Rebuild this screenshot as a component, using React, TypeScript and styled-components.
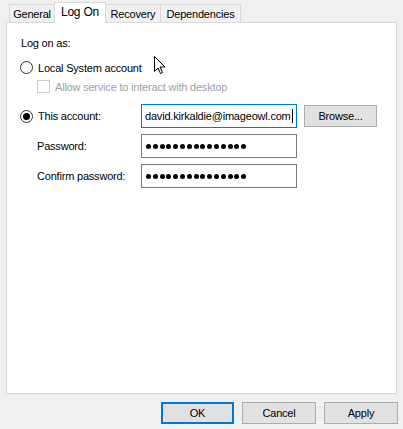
import styled, { createGlobalStyle } from "styled-components";

const GlobalStyle = createGlobalStyle`
  html, body {
    margin: 0;
    padding: 0;
    background: #f0f0f0;
  }
  * {
    box-sizing: border-box;
  }
`;

const tabs = [
  { label: "General", width: 46 },
  { label: "Log On", width: 52 },
  { label: "Recovery", width: 56 },
  { label: "Dependencies", width: 81 },
];

const Window = styled.div`
  position: relative;
  width: 403px;
  height: 429px;
  background: #f0f0f0;
  font-family: "Liberation Sans", Arial, sans-serif;
  font-size: 11px;
  letter-spacing: -0.2px;
  color: #000;
  overflow: hidden;
`;

const TabStrip = styled.div`
  display: flex;
  align-items: flex-end;
  height: 22px;
  padding: 2px 0 0 10px;
`;

const Tab = styled.div<{ $active?: boolean; $width: number }>`
  position: relative;
  z-index: ${(p) => (p.$active ? 2 : 1)};
  width: ${(p) => p.$width}px;
  height: ${(p) => (p.$active ? 21 : 18)}px;
  margin-left: -1px;
  margin-bottom: ${(p) => (p.$active ? -1 : 0)}px;
  display: flex;
  align-items: center;
  justify-content: center;
  padding-bottom: ${(p) => (p.$active ? 3 : 0)}px;
  border: 1px solid #d9d9d9;
  border-bottom: none;
  background: ${(p) => (p.$active ? "#fff" : "#f0f0f0")};
  font-size: ${(p) => (p.$active ? 12 : 11)}px;
`;

const Panel = styled.div`
  margin: 0 6px;
  height: 372px;
  border: 1px solid #d9d9d9;
  background: #fff;
  padding: 13px 0 0 13px;
  display: flex;
  flex-direction: column;
`;

const Heading = styled.div`
  line-height: 15px;
  margin-left: 1px;
`;

const OptionRow = styled.div<{ $indent?: number; $top: number }>`
  display: flex;
  align-items: center;
  gap: 5px;
  height: 15px;
  margin-top: ${(p) => p.$top}px;
  margin-left: ${(p) => p.$indent ?? 0}px;
`;

const Radio = styled.span<{ $checked?: boolean }>`
  width: 13px;
  height: 13px;
  border: 1px solid #333;
  border-radius: 50%;
  background: #fff;
  display: flex;
  align-items: center;
  justify-content: center;
  flex-shrink: 0;

  &::after {
    content: "";
    display: ${(p) => (p.$checked ? "block" : "none")};
    width: 7px;
    height: 7px;
    border-radius: 50%;
    background: #000;
  }
`;

const CheckBox = styled.span`
  width: 13px;
  height: 13px;
  border: 1px solid #cccccc;
  background: #fff;
  flex-shrink: 0;
`;

const Muted = styled.span`
  color: #a0a0a0;
`;

const AccountGrid = styled.div`
  display: grid;
  grid-template-columns: 114px 156px 73px;
  grid-template-rows: 24px 24px 24px;
  column-gap: 7px;
  row-gap: 6px;
  margin-top: 10px;
  align-items: center;
`;

const FieldLabel = styled.div<{ $indent?: boolean }>`
  display: flex;
  align-items: center;
  gap: 5px;
  padding-left: ${(p) => (p.$indent ? 17 : 0)}px;
`;

const Field = styled.div<{ $focused?: boolean }>`
  height: 24px;
  border: 1px solid ${(p) => (p.$focused ? "#0078d7" : "#7a7a7a")};
  background: #fff;
  display: flex;
  align-items: center;
  padding-left: 3px;
  white-space: nowrap;
`;

const Caret = styled.span`
  display: inline-block;
  width: 1px;
  height: 14px;
  margin-left: 1px;
  background: #000;
`;

const Dots = styled.div`
  display: flex;
  gap: 1.8px;
  padding-left: 1px;
`;

const Dot = styled.span`
  width: 5px;
  height: 5px;
  border-radius: 50%;
  background: #000;
`;

const Button = styled.button<{ $default?: boolean; $width?: number }>`
  height: 22px;
  width: ${(p) => p.$width ?? 74}px;
  padding: 0;
  font-family: inherit;
  font-size: 11px;
  letter-spacing: -0.2px;
  color: #000;
  background: #e1e1e1;
  border: ${(p) => (p.$default ? "2px solid #0078d7" : "1px solid #adadad")};
  border-radius: 0;
`;

const BrowseButton = styled(Button)`
  align-self: center;
`;

const Footer = styled.div`
  display: flex;
  justify-content: flex-end;
  gap: 8px;
  padding: 8px 5px 0 0;
`;

const Pointer = styled.svg`
  position: absolute;
  left: 154px;
  top: 56px;
`;

const PasswordDots = ({ count }: { count: number }) => (
  <Dots>
    {Array.from({ length: count }).map((_, i) => (
      <Dot key={i} />
    ))}
  </Dots>
);

export default function App() {
  return (
    <Window>
      <GlobalStyle />
      <TabStrip>
        {tabs.map((t) => (
          <Tab key={t.label} $width={t.width} $active={t.label === "Log On"}>
            {t.label}
          </Tab>
        ))}
      </TabStrip>
      <Panel>
        <Heading>Log on as:</Heading>
        <OptionRow $top={9}>
          <Radio />
          <span>Local System account</span>
        </OptionRow>
        <OptionRow $top={4} $indent={17}>
          <CheckBox />
          <Muted>Allow service to interact with desktop</Muted>
        </OptionRow>
        <AccountGrid>
          <FieldLabel>
            <Radio $checked />
            <span>This account:</span>
          </FieldLabel>
          <Field $focused>
            david.kirkaldie@imageowl.com
            <Caret />
          </Field>
          <BrowseButton $width={73}>Browse...</BrowseButton>

          <FieldLabel $indent>Password:</FieldLabel>
          <Field>
            <PasswordDots count={15} />
          </Field>
          <div />

          <FieldLabel $indent>Confirm password:</FieldLabel>
          <Field>
            <PasswordDots count={15} />
          </Field>
          <div />
        </AccountGrid>
      </Panel>
      <Footer>
        <Button $default $width={73}>
          OK
        </Button>
        <Button>Cancel</Button>
        <Button>Apply</Button>
      </Footer>
      <Pointer width="12" height="19" viewBox="0 0 12 19">
        <path
          d="M0.5 0.5 L0.5 15.5 L4 12 L6.5 17.5 L8.5 16.5 L6 11 L11 11 Z"
          fill="#fff"
          stroke="#000"
          strokeWidth="1"
          strokeLinejoin="miter"
        />
      </Pointer>
    </Window>
  );
}
